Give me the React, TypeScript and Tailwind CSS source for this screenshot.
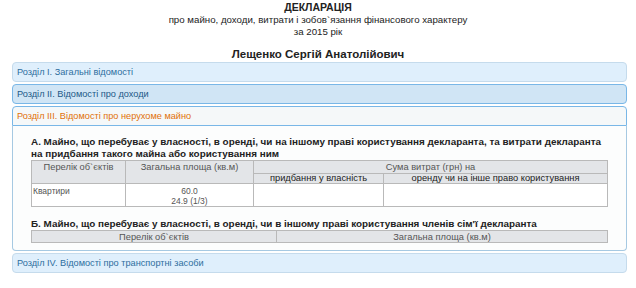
import React from "react";

function SectionHeader({
  label,
  variant,
}: {
  label: string;
  variant: "default" | "hover" | "active";
}) {
  const cls =
    variant === "default"
      ? "rounded-[4px] border-[#c5dbec] bg-[#dfeffc] text-[#2e6e9e]"
      : variant === "hover"
      ? "rounded-[4px] border-[#79b7e7] bg-[#d0e5f5] text-[#1d5987]"
      : "rounded-t-[4px] border-[#79b7e7] bg-[#f5f8f9] text-[#e17009]";
  return (
    <div className={`h-[20px] border pl-[4px] text-[9.2px] leading-[18px] ${cls}`}>
      {label}
    </div>
  );
}

export default function App() {
  return (
    <div className="h-[288px] w-[636px] overflow-hidden bg-white text-[#222] [font-family:'Liberation_Sans',Arial,sans-serif]">
      <div className="pt-[1px] text-center">
        <div className="text-[10.5px] font-bold leading-[13px]">ДЕКЛАРАЦІЯ</div>
        <div className="text-[9.7px] leading-[12px]">
          про майно, доходи, витрати і зобов`язання фінансового характеру
        </div>
        <div className="text-[9.7px] leading-[12px]">за 2015 рік</div>
        <div className="mt-[9px] text-[11.5px] font-bold leading-[14px]">
          Лещенко Сергій Анатолійович
        </div>
      </div>

      <div className="ml-[12px] mr-[9px] mt-[1px] flex flex-col gap-[2px]">
        <SectionHeader label="Розділ І. Загальні відомості" variant="default" />
        <SectionHeader label="Розділ ІІ. Відомості про доходи" variant="hover" />
        <div className="flex flex-col">
          <SectionHeader label="Розділ ІІІ. Відомості про нерухоме майно" variant="active" />
          <div className="rounded-b-[4px] border border-t-0 border-[#a6c9e2] bg-[#fcfdfd] pb-[7px] pl-[18px] pr-[19px] pt-[10px]">
            <div className="text-[9.9px] font-bold leading-[12px] text-[#222]">
              А. Майно, що перебуває у власності, в оренді, чи на іншому праві користування декларанта, та витрати декларанта на придбання такого майна або користування ним
            </div>
            <table className="w-[576px] table-fixed border-collapse text-[9.3px] text-[#555]">
              <colgroup>
                <col className="w-[94px]" />
                <col className="w-[128px]" />
                <col className="w-[130px]" />
                <col className="w-[224px]" />
              </colgroup>
              <tbody>
                <tr className="h-[13px] bg-[#e3e5e8]">
                  <td rowSpan={2} className="border border-[#b9b9b9] p-0 pt-[1px] text-center align-top leading-[11px]">
                    Перелік об`єктів
                  </td>
                  <td rowSpan={2} className="border border-[#b9b9b9] p-0 pt-[1px] text-center align-top leading-[11px]">
                    Загальна площа (кв.м)
                  </td>
                  <td colSpan={2} className="border border-[#b9b9b9] p-0 text-center leading-[11px]">
                    Сума витрат (грн) на
                  </td>
                </tr>
                <tr className="h-[10px] bg-[#e3e5e8] text-[#222]">
                  <td className="border border-[#b9b9b9] p-0 text-center leading-[9px]">
                    придбання у власність
                  </td>
                  <td className="border border-[#b9b9b9] p-0 text-center leading-[9px]">
                    оренду чи на інше право користування
                  </td>
                </tr>
                <tr className="bg-white text-[8.5px]">
                  <td className="border border-[#b9b9b9] p-0 pl-[1px] pt-[2px] align-top leading-[10px]">
                    Квартири
                  </td>
                  <td className="border border-[#b9b9b9] p-0 pt-[2px] text-center align-top leading-[10px]">
                    <div>60.0</div>
                    <div>24.9 (1/3)</div>
                  </td>
                  <td className="border border-[#b9b9b9] p-0"></td>
                  <td className="border border-[#b9b9b9] p-0"></td>
                </tr>
              </tbody>
            </table>

            <div className="mt-[11px] text-[9.9px] font-bold leading-[12px] text-[#222]">
              Б. Майно, що перебуває у власності, в оренді, чи в іншому праві користування членів сім'ї декларанта
            </div>
            <table className="w-[576px] table-fixed border-collapse text-[9.3px] text-[#555]">
              <colgroup>
                <col className="w-[245px]" />
                <col className="w-[331px]" />
              </colgroup>
              <tbody>
                <tr className="h-[12px] bg-[#e3e5e8]">
                  <td className="border border-[#b9b9b9] p-0 text-center leading-[10px]">Перелік об`єктів</td>
                  <td className="border border-[#b9b9b9] p-0 text-center leading-[10px]">Загальна площа (кв.м)</td>
                </tr>
              </tbody>
            </table>
          </div>
        </div>
        <SectionHeader label="Розділ IV. Відомості про транспортні засоби" variant="default" />
      </div>
    </div>
  );
}
